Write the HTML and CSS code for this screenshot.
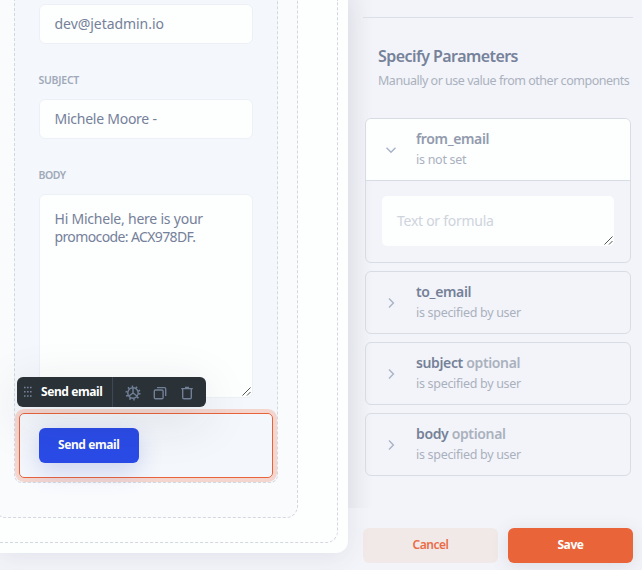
FILE: index.html
```html
<!DOCTYPE html>
<html lang="en">
<head>
<meta charset="utf-8">
<title>Send email action</title>
<link rel="stylesheet" href="styles.css">
</head>
<body>
<div class="app">
  <main class="stage">
    <div class="sheet">
      <div class="outer">
        <div class="inner">
          <div class="form">
            <div class="field"><span class="t w-mail">dev@jetadmin.io</span></div>
            <div class="label"><span class="t w-subj">SUBJECT</span></div>
            <div class="field"><span class="t w-moore">Michele Moore -</span></div>
            <div class="label"><span class="t w-body">BODY</span></div>
            <div class="field area"><span class="t w-hi">Hi Michele, here is your</span><span class="t w-promo">promocode: ACX978DF.</span>
              <svg class="grip" viewBox="0 0 9 9"><path d="M.5 8.500l8-8M5 8.500L8.500 5"/></svg>
            </div>
            <div class="selected">
              <div class="toolbar">
                <svg class="dots" viewBox="0 0 8 12"><path d="M0 1.500h1.600M3 1.500h1.600M6 1.500h1.600M0 5.700h1.600M3 5.700h1.600M6 5.700h1.600M0 10h1.600M3 10h1.600M6 10h1.600"/></svg>
                <b class="tool-name"><span class="t w-tool">Send email</span></b>
                <div class="tools">
                  <svg viewBox="0 0 16 16"><circle cx="8" cy="8" r="5.200"/><circle cx="8" cy="8" r="6.500" class="teeth"/><path d="M8 8V3M8 8l-4 3M8 8l4 3"/></svg>
                  <svg viewBox="0 0 16 16"><rect x="2.300" y="5" width="8.800" height="8.800" rx="1.200"/><path d="M5 2.600h7.500q1.200 0 1.200 1.200v7.200"/></svg>
                  <svg viewBox="0 0 16 16"><path d="M2.200 3.600h11.600M6 2.500h4M3.700 4v8.600q0 1.200 1.200 1.200h6.200q1.200 0 1.200-1.200V4"/></svg>
                </div>
              </div>
              <div class="send"><span class="t w-tool">Send email</span></div>
            </div>
          </div>
        </div>
      </div>
    </div>
  </main>
  <aside class="panel">
    <div class="scroll">
      <hr>
      <h1><span class="t w-title">Specify Parameters</span></h1>
      <p class="hint"><span class="t w-hint">Manually or use value from other components</span></p>
      <section class="param open">
        <header>
          <svg class="chev" viewBox="0 0 10 10"><path d="M.5 2.800L5 7.200l4.500-4.400"/></svg>
          <div><h2><span class="t w-from">from_email</span></h2><p><span class="t w-notset">is not set</span></p></div>
        </header>
        <div class="value"><div class="formula"><span class="t w-formula">Text or formula</span>
          <svg class="grip" viewBox="0 0 9 9"><path d="M.5 8.500l8-8M5 8.500L8.500 5"/></svg></div></div>
      </section>
      <section class="param">
        <header>
          <svg class="chev" viewBox="0 0 10 10"><path d="M3 .5L7.400 5 3 9.500"/></svg>
          <div><h2><span class="t w-to">to_email</span></h2><p><span class="t w-user">is specified by user</span></p></div>
        </header>
      </section>
      <section class="param">
        <header>
          <svg class="chev" viewBox="0 0 10 10"><path d="M3 .5L7.400 5 3 9.500"/></svg>
          <div><h2><span class="t w-so">subject <i>optional</i></span></h2><p><span class="t w-user">is specified by user</span></p></div>
        </header>
      </section>
      <section class="param">
        <header>
          <svg class="chev" viewBox="0 0 10 10"><path d="M3 .5L7.400 5 3 9.500"/></svg>
          <div><h2><span class="t w-bo">body <i>optional</i></span></h2><p><span class="t w-user">is specified by user</span></p></div>
        </header>
      </section>
    </div>
    <footer>
      <div class="btn cancel"><span class="t w-cancel">Cancel</span></div>
      <div class="btn save"><span class="t w-save">Save</span></div>
    </footer>
  </aside>
</div>
</body>
</html>
```
FILE: styles.css
```css
* { box-sizing: border-box; }
body { margin: 0; font-family: "Noto Sans", "Open Sans", sans-serif; color: #75819a; }
h1, h2, p, hr { margin: 0; }
i { font-style: normal; }
svg { fill: none; display: block; flex: none; }
.t { white-space: nowrap; display: block; }
.app { display: flex; width: 642px; height: 570px; overflow: hidden; background: #f3f4f9; }

.stage { width: 348px; flex: none; background: #f3f4f9; }
.sheet { height: 553px; padding: 0 10px 10px 0; background: #fdfefe; border-radius: 0 0 12px 0; box-shadow: 0 4px 24px rgba(60,65,100,.09); position: relative; }
.outer { height: 543px; margin-left: -20px; padding: 0 39px 24px 0; border: dashed #d3d7de; border-width: 0 1px 1px 0; border-radius: 0 0 12px 0; }
.inner { height: 518px; margin-left: 14px; padding: 0 19px 34px 19px; border: 1px dashed #d3d7de; border-top: 0; border-radius: 0 0 12px 12px; background: #fafbfd; }
.form { height: 483px; padding: 4px 4px 4px; border: 1px dashed #d3d7de; border-top: 0; border-radius: 0 0 8px 8px; background: #f4f7fb; }
.field { width: 214px; height: 40px; margin-left: 20px; padding: 10px 14.500px; border: 1px solid #edf0f6; border-radius: 6px; background: #fdfefe; font-size: 14px; line-height: 18px; }
.label { height: 55px; padding: 28px 0 0 19.500px; font-size: 10.500px; line-height: 16px; font-weight: 600; color: #a0a9b9; }
.area { height: 204px; padding-top: 15px; position: relative; }
.grip { position: absolute; right: 1px; bottom: 1px; width: 9px; height: 9px; stroke: #555; stroke-width: 1; }
.selected { position: relative; width: 254px; height: 65px; margin-top: 15px; padding: 14px 19px; border: 1px solid #e8633c; border-radius: 5px; box-shadow: 0 0 0 4px #f4d6cf; }
.toolbar { position: absolute; left: -3px; top: -37px; width: 189px; height: 30px; display: flex; align-items: center; padding-left: 7px; border-radius: 6px; background: #2a3137; box-shadow: 0 12px 50px rgba(42,49,55,.13); }
.dots { width: 8px; height: 12px; stroke: #75829a; stroke-width: 1.600; }
.tool-name { width: 80px; padding-left: 9px; font-size: 12px; line-height: 28px; color: #fff; }
.tools { height: 30px; flex: 1; display: flex; align-items: center; gap: 11px; padding-left: 12px; border-left: 1px solid #3e4855; }
.tools svg { width: 16px; height: 16px; stroke: #718097; stroke-width: 1.400; position: relative; top: .5px; }
.tools .teeth { stroke-width: 2; stroke-dasharray: 1.500 2.580; }
.send { width: 100px; height: 35px; padding-left: 19px; border-radius: 6px; background: #2a4be6; color: #fff; font-size: 12px; font-weight: 700; line-height: 33px; box-shadow: 0 8px 24px rgba(42,65,200,.2); }

.panel { width: 294px; flex: none; }
.scroll { height: 508px; padding: 17px 9px 0 15px; background: linear-gradient(90deg, #ebecf2, #f3f4f9 26px); }
hr { height: 1px; border: 0; background: #dcdfe7; }
h1 { margin: 27px 0 0 15px; font-size: 16px; line-height: 22px; font-weight: 600; color: #76829a; }
.hint { height: 51px; margin-left: 15px; padding-top: 5px; font-size: 12.500px; line-height: 18px; color: #aab1be; }
.param { width: 266px; height: 63px; margin: 0 0 8px 2px; border: 1px solid #d8dce4; border-radius: 6px; overflow: hidden; }
.param header { display: flex; align-items: center; height: 61px; padding-left: 20px; }
.param header > div { margin-left: 20px; }
.chev { width: 10px; height: 10px; stroke: #a7b3c7; stroke-width: 1.400; }
h2 { margin-top: -1px; font-size: 14px; line-height: 20px; font-weight: 600; color: #758198; }
h2 i { color: #aab1be; }
.param p { padding-top: 1px; font-size: 12.500px; line-height: 20px; color: #aab1be; }
.param.open { height: 145px; }
.open header { height: 62px; border-bottom: 1px solid #d8dce4; background: #fdfefe; }
.open h2 { color: #919bad; }
.value { padding: 15px 0 0 16px; }
.formula { position: relative; width: 232px; height: 50px; padding: 16px 15px; border-radius: 5px; background: #fdfefe; font-size: 14px; line-height: 18px; color: #ced4dd; }
footer { display: flex; gap: 10px; padding: 20px 9px 7px 15px; height: 62px; background: #f3f4f9; }
.btn { height: 35px; border-radius: 6px; display: flex; justify-content: center; font-size: 12px; line-height: 33px; font-weight: 700; }
.cancel { width: 135px; background: #f1e9e8; color: #eb6b46; font-weight: 600; }
.save { width: 125px; background: #e96439; color: #fff; box-shadow: 0 3px 18px rgba(60,80,100,.13); }

.w-mail { letter-spacing: -.05px; }
.w-moore { letter-spacing: -.25px; }
.w-hi { letter-spacing: -.22px; }
.w-promo { letter-spacing: -.62px; }
.w-formula { letter-spacing: -.27px; }
.w-subj { letter-spacing: -.25px; }
.w-body { letter-spacing: -.5px; }
.w-tool { letter-spacing: -.42px; }
.w-title { letter-spacing: -.57px; }
.w-hint { letter-spacing: -.48px; }
.w-user { letter-spacing: -.3px; }
.w-notset { letter-spacing: -.27px; }
.w-from, .w-to, .w-so { letter-spacing: -.36px; }
.w-bo { letter-spacing: -.36px; }
.w-cancel { letter-spacing: -.5px; }
.w-save { letter-spacing: -.4px; }
```
